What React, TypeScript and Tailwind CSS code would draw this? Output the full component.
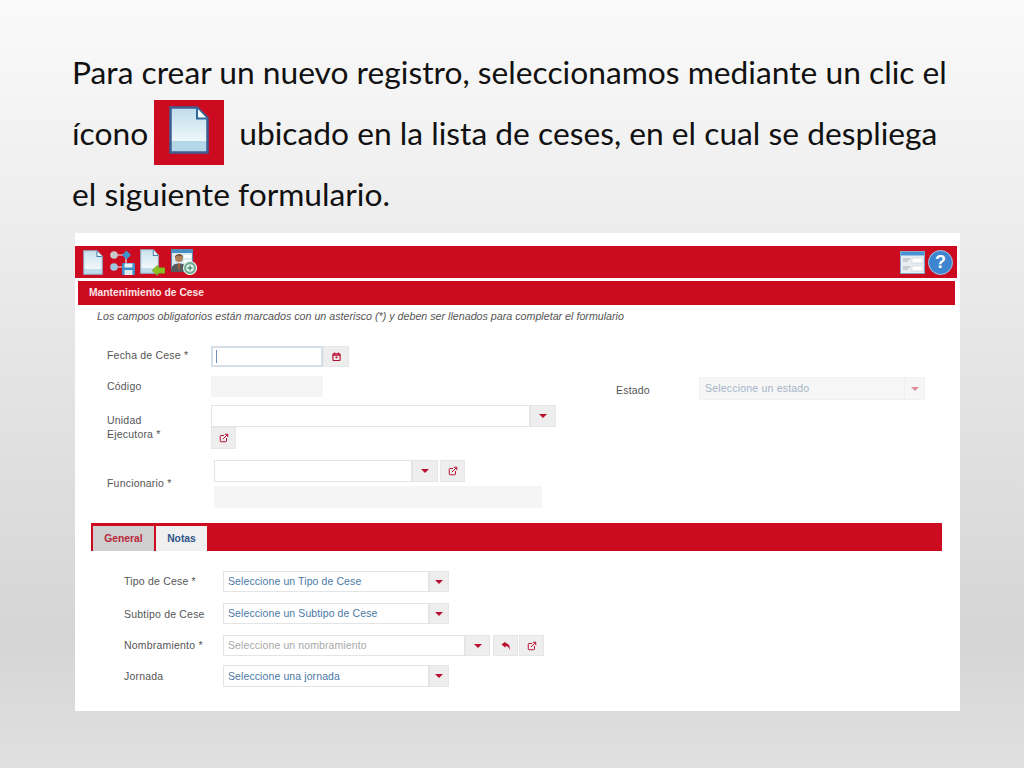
import React from "react";
import { ExternalLink } from "lucide-react";

function DocIcon({ className }: { className?: string }) {
  return (
    <svg viewBox="0 0 40 48" className={className} preserveAspectRatio="none">
      <defs>
        <linearGradient id="docg" x1="0" y1="0" x2="0" y2="1">
          <stop offset="0" stopColor="#bfdcea" />
          <stop offset="0.74" stopColor="#eef7fa" />
          <stop offset="0.75" stopColor="#b5d8e8" />
          <stop offset="1" stopColor="#b5d8e8" />
        </linearGradient>
      </defs>
      <path d="M1.5 1.5H28L38.5 12V46.5H1.5Z" fill="url(#docg)" stroke="#3d5f92" strokeWidth="2.5" />
      <path d="M28 2V12.5H38" fill="#f4fafc" stroke="#2c6a9e" strokeWidth="2" />
    </svg>
  );
}

function ToolDoc({ className }: { className?: string }) {
  return (
    <svg viewBox="0 0 40 48" className={className} preserveAspectRatio="none">
      <defs>
        <linearGradient id="tdocg" x1="0" y1="0" x2="0" y2="1">
          <stop offset="0" stopColor="#c8e0ec" />
          <stop offset="0.78" stopColor="#f2f8fb" />
          <stop offset="0.79" stopColor="#bedcea" />
          <stop offset="1" stopColor="#bedcea" />
        </linearGradient>
      </defs>
      <path d="M1.5 1.5H28L38.5 12V46.5H1.5Z" fill="url(#tdocg)" stroke="#8fb4cf" strokeWidth="2" />
      <path d="M28 2V12.5H38" fill="#f4fafc" stroke="#3f7fb0" strokeWidth="2" />
    </svg>
  );
}

function FlowIcon() {
  return (
    <svg viewBox="0 0 26 26" className="w-[26px] h-[26px] ml-[6px]">
      <path d="M5 6H17M5 18H14" stroke="#e8e8e8" strokeWidth="1.2" fill="none" />
      <path d="M17 8V16" stroke="#e8e8e8" strokeWidth="1.2" fill="none" />
      <circle cx="5" cy="6" r="3.8" fill="#c9c9cc" />
      <circle cx="5" cy="18" r="3.8" fill="#9cc6e2" />
      <path d="M17.5 1.5L22 6L17.5 10.5L13 6Z" fill="#3f93cc" />
      <rect x="13" y="14" width="13" height="12" rx="1" fill="#3f8fc4" />
      <rect x="15.5" y="14.5" width="8" height="4" fill="#e8f2f8" />
      <rect x="15.5" y="21" width="8" height="5" fill="#dbe9f2" />
    </svg>
  );
}

function DocArrowIcon() {
  return (
    <div className="relative w-[25px] h-[26px] ml-[5px]">
      <ToolDoc className="w-[19px] h-[25px]" />
      <svg viewBox="0 0 14 12" className="absolute right-0 bottom-[-1px] w-[13px] h-[11px]">
        <path d="M0 6L6 0V3H14V9H6V12Z" fill="#8cc021" stroke="#6f9f1a" strokeWidth="0.6" />
      </svg>
    </div>
  );
}

function PersonIcon() {
  return (
    <svg viewBox="0 0 27 26" className="w-[27px] h-[26px] ml-[5px]">
      <rect x="1.5" y="0.5" width="21" height="20" fill="#dbe9f2" stroke="#5a8cb2" />
      <rect x="1.5" y="0.5" width="21" height="3.5" fill="#4a8fc4" />
      <rect x="14" y="6" width="7" height="3" fill="#fff" />
      <rect x="14" y="11" width="7" height="3" fill="#fff" />
      <circle cx="9" cy="9" r="4" fill="#b08058" />
      <path d="M5 8.5C5 4.5 13 4.5 13 8L11 6.5H7Z" fill="#4a2f1c" />
      <path d="M1 23C1 15.5 5 14.5 9 14.5C13 14.5 17 15.5 17 23Z" fill="#55585c" />
      <path d="M8 14.5H10L9.5 21H8.5Z" fill="#b8602c" />
      <circle cx="20" cy="19" r="6.5" fill="#6fa892" stroke="#dff0e8" strokeWidth="1.2" />
      <circle cx="20" cy="19" r="3.8" fill="#eef7f2" />
      <path d="M20 16.5V21.5M17.5 19H22.5" stroke="#4f8f78" strokeWidth="1.5" />
    </svg>
  );
}

function WindowIcon() {
  return (
    <svg viewBox="0 0 25 23" className="w-[25px] h-[23px]">
      <rect x="0.5" y="0.5" width="24" height="22" fill="#e6eef3" stroke="#7fa8c8" />
      <rect x="1" y="1" width="23" height="3.5" fill="#4a94d4" />
      <rect x="12" y="7" width="11" height="5" fill="#fff" stroke="#b8c4cc" strokeWidth="0.5" />
      <rect x="12" y="15" width="11" height="5" fill="#fff" stroke="#b8c4cc" strokeWidth="0.5" />
      <path d="M3 8H10M3 10H8M3 16H10M3 18H8" stroke="#9a9a9a" strokeWidth="0.8" />
    </svg>
  );
}

function HelpIcon() {
  return (
    <div className="w-[25px] h-[25px] rounded-full bg-[#3d86cf] border border-[#a8c8e2] flex items-center justify-center text-white font-bold text-[18px] leading-none ml-[3px]">
      ?
    </div>
  );
}

function CalIcon() {
  return (
    <svg viewBox="0 0 10 10" className="w-[9px] h-[9px]">
      <rect x="1" y="2" width="8" height="7.5" rx="1" fill="none" stroke="#b8102e" strokeWidth="1.3" />
      <path d="M3 0.5V2.5M7 0.5V2.5M1 3.5H9" stroke="#b8102e" strokeWidth="1.2" />
      <rect x="4" y="5" width="2" height="2" fill="#b8102e" />
    </svg>
  );
}

function BackIcon() {
  return (
    <svg viewBox="0 0 10 10" className="w-[10px] h-[10px]">
      <path d="M0.5 3.5L4.5 0.5V2.3C7.5 2.3 9.3 4.5 8.5 9C8 6.5 6.8 5 4.5 5V6.8Z" fill="#b8102e" />
    </svg>
  );
}

function Caret({ light }: { light?: boolean }) {
  return (
    <span
      className={
        light
          ? "w-0 h-0 border-x-[4px] border-x-transparent border-t-[4px] border-t-[#e08a98]"
          : "w-0 h-0 border-x-[4px] border-x-transparent border-t-[4px] border-t-[#b8102e]"
      }
    />
  );
}

function Btn({ w, children }: { w: string; children: React.ReactNode }) {
  return (
    <div className={`${w} h-full bg-[#eeeeee] border border-[#e6e6e6] flex items-center justify-center shrink-0`}>
      {children}
    </div>
  );
}

function Link() {
  return <ExternalLink className="w-[10px] h-[10px] text-[#b8102e]" strokeWidth={2.4} />;
}

function Select({
  w,
  text,
  blue,
  btn = "w-[20px]",
}: {
  w: string;
  text: string;
  blue?: boolean;
  btn?: string;
}) {
  return (
    <div className="flex h-full">
      <div
        className={`${w} h-full bg-white border border-[#e4e4e4] flex items-center pl-[4px] pt-[1px] text-[10.5px] tracking-[0.1px] ${
          blue ? "text-[#4a78a4]" : "text-[#a8a8a8]"
        }`}
      >
        {text}
      </div>
      <Btn w={btn}>
        <Caret />
      </Btn>
    </div>
  );
}

function App() {
  return (
    <div
      className="w-[1024px] h-[768px] overflow-hidden bg-gradient-to-b from-[#fafafa] via-[#d5d5d5] via-83% to-[#e0e0e0] pt-[41px]"
      style={{ fontFamily: '"Liberation Sans", Arial, sans-serif' }}
    >
      <div
        className="pl-[72px] text-[31.75px] text-[#111111] whitespace-nowrap"
        style={{ fontFamily: 'Lato, "Open Sans", sans-serif' }}
      >
        <div className="h-[62px] leading-[62px]">Para crear un nuevo registro, seleccionamos mediante un clic el</div>
        <div className="h-[61px] leading-[61px] flex items-center">
          <span>ícono</span>
          <div className="w-[70px] h-[65px] ml-[6px] mr-[15px] -mt-[2px] bg-[#cc0a20] flex items-center justify-center shrink-0">
            <DocIcon className="w-[40px] h-[48px] -mt-[6px]" />
          </div>
          <span>ubicado en la lista de ceses, en el cual se despliega</span>
        </div>
        <div className="h-[61px] leading-[61px]">el siguiente formulario.</div>
      </div>

      <div className="ml-[75px] mt-[8px] w-[885px] h-[478px] bg-white pt-[13px] text-[10.5px] text-[#555555] tracking-[0.2px]">
        <div className="h-[32px] mr-[3px] bg-[#cc0a20] flex items-center pl-[8px] pr-[4px]">
          <ToolDoc className="w-[20px] h-[25px]" />
          <FlowIcon />
          <DocArrowIcon />
          <PersonIcon />
          <div className="ml-auto flex items-center">
            <WindowIcon />
            <HelpIcon />
          </div>
        </div>
        <div className="mt-[3px] ml-[3px] mr-[5px] h-[24px] bg-[#cc0a20] flex items-center pl-[11px] text-[10.3px] font-bold text-[#fbe6e6] tracking-normal">
          Mantenimiento de Cese
        </div>
        <div className="mt-[5px] ml-[22px] h-[12px] leading-[12px] italic text-[10.7px] text-[#555555] tracking-normal">
          Los campos obligatorios están marcados con un asterisco (*) y deben ser llenados para completar el formulario
        </div>

        <div className="mt-[24px] h-[21px] flex items-center pl-[32px]">
          <div className="w-[104px] pb-[2px]">Fecha de Cese *</div>
          <div className="w-[112px] h-full bg-white border-2 border-[#d5dfe9] flex items-center pl-[3px]">
            <div className="w-px h-[13px] bg-[#6f8fb8]" />
          </div>
          <Btn w="w-[26px]">
            <CalIcon />
          </Btn>
        </div>

        <div className="mt-[9px] h-[24px] flex pl-[32px]">
          <div className="w-[104px] pt-[3px]">Código</div>
          <div className="w-[112px] h-[21px] bg-[#f5f5f5]" />
          <div className="ml-[293px] w-[83px] pt-[7px]">Estado</div>
          <div className="w-[226px] h-[23px] mt-[1px] bg-[#f6f6f6] border border-[#f0f0f0] flex items-center pl-[5px] pt-[1px] text-[#a4b4c8]">
            <span className="flex-1">Seleccione un estado</span>
            <div className="w-[20px] h-full border-l border-[#efefef] flex items-center justify-center">
              <Caret light />
            </div>
          </div>
        </div>

        <div className="mt-[5px] h-[44px] flex pl-[32px]">
          <div className="w-[104px] pt-[8px] leading-[14px]">
            Unidad
            <br />
            Ejecutora *
          </div>
          <div className="flex flex-col">
            <div className="h-[22px]">
              <Select w="w-[319px]" text="" btn="w-[26px]" />
            </div>
            <div className="h-[22px]">
              <Btn w="w-[25px]">
                <Link />
              </Btn>
            </div>
          </div>
        </div>

        <div className="mt-[11px] h-[48px] flex pl-[32px]">
          <div className="w-[107px] pt-[16px]">Funcionario *</div>
          <div className="flex flex-col">
            <div className="h-[22px] flex">
              <Select w="w-[198px]" text="" btn="w-[26px]" />
              <div className="w-[2px]" />
              <Btn w="w-[25px]">
                <Link />
              </Btn>
            </div>
            <div className="mt-[4px] w-[328px] h-[22px] bg-[#f5f5f5]" />
          </div>
        </div>

        <div className="mt-[15px] ml-[16px] w-[851px] h-[28px] bg-[#cc0a20] flex items-end pl-[2px] gap-[2px] text-[10.3px] font-bold tracking-normal">
          <div className="w-[61px] h-[25px] bg-[#cfcfcf] text-[#b8263a] flex items-center justify-center">General</div>
          <div className="w-[51px] h-[25px] bg-[#f0f0f0] text-[#2f5488] flex items-center justify-center">Notas</div>
        </div>

        <div className="mt-[20px] h-[21px] flex items-center pl-[49px]">
          <div className="w-[99px]">Tipo de Cese *</div>
          <Select w="w-[206px]" text="Seleccione un Tipo de Cese" blue />
        </div>
        <div className="mt-[11px] h-[21px] flex items-center pl-[49px]">
          <div className="w-[99px] pt-[2px]">Subtipo de Cese</div>
          <Select w="w-[206px]" text="Seleccione un Subtipo de Cese" blue />
        </div>
        <div className="mt-[11px] h-[21px] flex items-center pl-[49px]">
          <div className="w-[99px]">Nombramiento *</div>
          <Select w="w-[242px]" text="Seleccione un nombramiento" btn="w-[25px]" />
          <div className="w-[3px]" />
          <Btn w="w-[25px]">
            <BackIcon />
          </Btn>
          <div className="w-px" />
          <Btn w="w-[25px]">
            <Link />
          </Btn>
        </div>
        <div className="mt-[9px] h-[22px] flex items-center pl-[49px]">
          <div className="w-[99px] pt-[2px]">Jornada</div>
          <Select w="w-[206px]" text="Seleccione una jornada" blue />
        </div>
      </div>
    </div>
  );
}

export default App;
